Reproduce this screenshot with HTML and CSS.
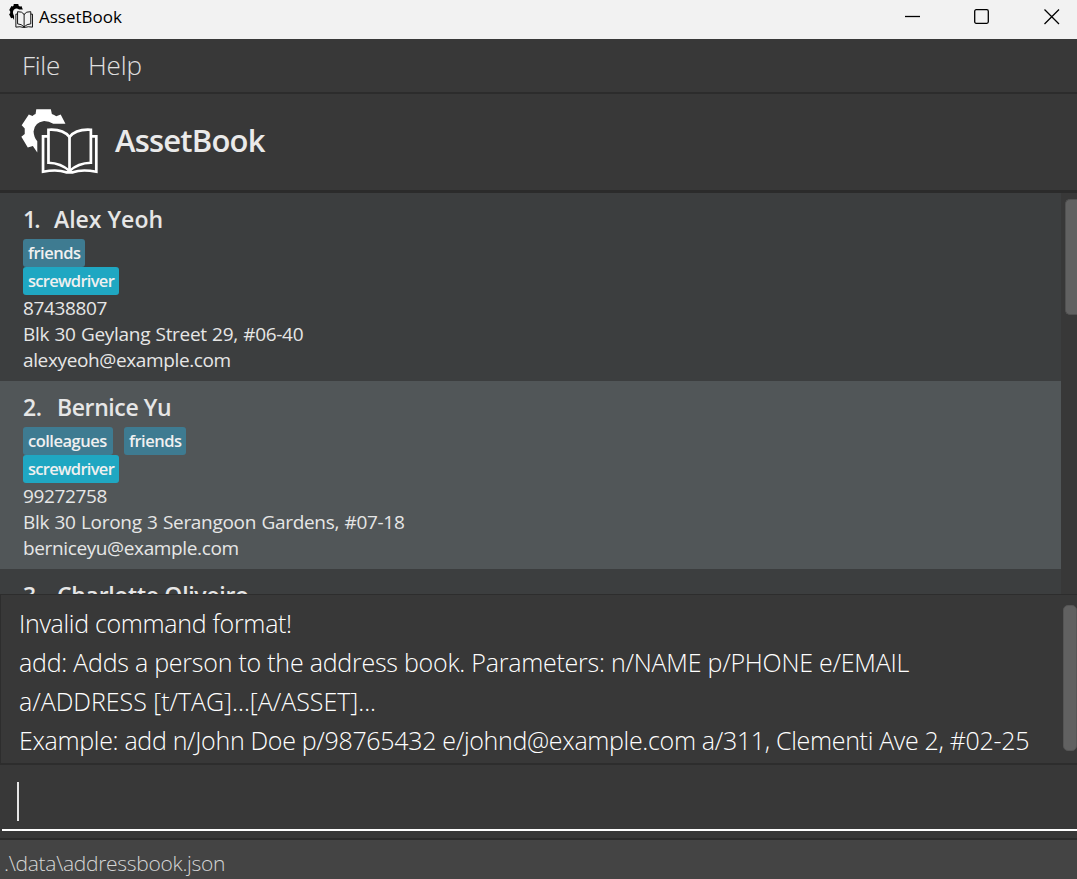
FILE: index.html
```html
<!DOCTYPE html>
<html lang="en">
<head>
<meta charset="utf-8">
<title>AssetBook</title>
<link rel="stylesheet" href="styles.css">
</head>
<body>
<svg class="defs" aria-hidden="true">
  <symbol id="logo" viewBox="20 26 227 197" preserveAspectRatio="none">
    <path fill="currentColor" d="M65 27H108L111 41Q118 43 124 48L137 43L151 71H115Q103 62 88 62Q59 66 57 94Q58 112 68 124V158L55 138L40 143L21 110L31 102V85L22 75L43 43L54 47Q58 43 63 41Z"/>
    <g fill="none" stroke="currentColor" stroke-width="8">
      <path d="M101 109H85V216Q128 208 153 218H173Q198 208 242 216V109H226"/>
      <path d="M101 89Q144 86 163 111Q182 86 226 89V189Q188 190 163 214Q138 190 101 189Z"/>
      <path d="M163 108V216"/>
    </g>
  </symbol>
</svg>
<div class="window">
  <header class="titlebar">
    <svg class="title-icon"><use href="#logo"/></svg>
    <span class="title-text">AssetBook</span>
    <div class="controls">
      <svg viewBox="0 0 16 16"><path d="M1 7.5H16"/></svg>
      <svg viewBox="0 0 16 16"><rect x=".7" y=".7" width="13.6" height="13.6" rx="1.5"/></svg>
      <svg viewBox="0 0 16 16"><path d="M.5 .5L15 15M15 .5L.5 15"/></svg>
    </div>
  </header>
  <nav class="menubar"><span class="file">File</span><span class="help">Help</span></nav>
  <div class="brand">
    <svg class="brand-icon"><use href="#logo"/></svg>
    <h1>AssetBook</h1>
  </div>
  <main class="list">
    <div class="cards">
      <article class="card">
        <h2><span class="num narrow">1.</span><span class="n1">Alex Yeoh</span></h2>
        <div class="tags"><span class="tag friends">friends</span></div>
        <div class="tags"><span class="tag asset">screwdriver</span></div>
        <p>87438807</p>
        <p class="address">Blk 30 Geylang Street 29, #06-40</p>
        <p>alexyeoh@example.com</p>
      </article>
      <article class="card alt">
        <h2><span class="num">2.</span><span class="n2">Bernice Yu</span></h2>
        <div class="tags"><span class="tag colleagues">colleagues</span><span class="tag friends">friends</span></div>
        <div class="tags"><span class="tag asset">screwdriver</span></div>
        <p>99272758</p>
        <p class="address">Blk 30 Lorong 3 Serangoon Gardens, #07-18</p>
        <p>berniceyu@example.com</p>
      </article>
      <article class="card">
        <h2><span class="num">3.</span><span class="n3">Charlotte Oliveiro</span></h2>
      </article>
    </div>
    <div class="scroll"><div class="thumb"></div></div>
  </main>
  <section class="result">
    <div class="message">
      <p class="r1">Invalid command format!</p>
      <p class="r2">add: Adds a person to the address book. Parameters: n/NAME p/PHONE e/EMAIL</p>
      <p class="r3">a/ADDRESS [t/TAG]...[A/ASSET]...</p>
      <p class="r4">Example: add n/John Doe p/98765432 e/johnd@example.com a/311, Clementi Ave 2, #02-25</p>
    </div>
    <div class="thumb"></div>
  </section>
  <section class="command"><div class="field"><span class="caret"></span></div></section>
  <footer class="status"><span>.\data\addressbook.json</span></footer>
</div>
</body>
</html>
```
FILE: styles.css
```css
* { box-sizing: border-box; margin: 0; padding: 0; }
body { width: 1077px; height: 879px; overflow: hidden; background: #383838; font-family: "Open Sans", "Noto Sans", sans-serif; }
.defs { display: none; }
.window { display: flex; flex-direction: column; height: 879px; white-space: nowrap; }
.titlebar { display: flex; align-items: center; height: 39px; flex: none; padding: 0 17px 6px 9px; background: #f2f2f2; color: #000; }
.title-icon { width: 24px; height: 24px; margin-top: -1px; }
.title-text { margin-left: 6px; font-size: 17px; line-height: 24px; letter-spacing: 0; }
.controls { display: flex; gap: 54px; margin-left: auto; }
.controls svg { width: 16px; height: 16px; fill: none; stroke: #000; stroke-width: 1.3; }
.menubar { display: flex; gap: 28px; height: 55px; flex: none; padding-left: 22px; border-bottom: 2px solid #2c2c2c; color: #e0e0e0; font-size: 26px; line-height: 52px; font-weight: 300; }
.file { width: 38px; letter-spacing: -0.3px; }
.help { letter-spacing: -0.1px; }
.brand { display: flex; height: 99px; flex: none; padding: 15px 0 0 21px; border-bottom: 3px solid #2b2b2b; color: #fff; }
.brand-icon { width: 77px; height: 65px; }
.brand h1 { margin-left: 17px; font-size: 31px; line-height: 32px; margin-top: 15px; font-weight: 600; letter-spacing: -0.8px; color: #eaeaea; }
.list { display: flex; height: 401px; flex: none; overflow: hidden; }
.cards { width: 1061px; flex: none; }
.card { height: 188px; padding: 10px 0 0 23px; background: #3c3e3f; color: #e6e6e6; }
.card.alt { background: #515658; }
.card h2 { display: flex; height: 36px; font-size: 23px; line-height: 32px; font-weight: 600; letter-spacing: -0.4px; }
.num { width: 34px; }
.num.narrow { width: 31px; letter-spacing: -2px; }
.n1 { letter-spacing: 0; }
.n3 { letter-spacing: -0.3px; }
.tags { display: flex; gap: 11px; height: 28px; }
.tag { height: 28px; padding-left: 5px; border-radius: 3px; background: #3e7b91; color: #f0f0f0; font-size: 16.5px; line-height: 28px; font-weight: 600; letter-spacing: -0.5px; }
.tag.friends { width: 62px; }
.tag.colleagues { width: 90px; }
.tag.asset { width: 96px; background: #1fa7c2; letter-spacing: -0.7px; }
.card p { height: 26px; font-size: 19px; line-height: 26px; letter-spacing: -0.37px; }
.card p.address { letter-spacing: -0.3px; word-spacing: 0.7px; }
.scroll { flex: 1; padding: 6px 0 0 4px; background: #383838; }
.scroll .thumb { width: 12px; height: 116px; border-radius: 5px 0 0 5px; background: #616161; border: 1px solid #515151; border-right: 0; }
.result { display: flex; justify-content: space-between; height: 171px; flex: none; padding: 10px 0 0 18px; border: 2px solid #2d2d2d; border-width: 1px 0 2px 1px; }
.message { margin-top: -1px; color: #fff; font-size: 25px; line-height: 39px; font-weight: 300; }
.r1 { letter-spacing: -0.32px; }
.r2 { letter-spacing: -0.24px; }
.r3 { letter-spacing: -0.03px; }
.r4 { letter-spacing: -0.32px; }
.result .thumb { width: 14px; height: 146px; border-radius: 5px; background: #616161; border: 1px solid #555; }
.command { height: 73px; flex: none; padding-left: 2px; }
.field { height: 66px; padding: 17px 0 0 15px; border-bottom: 2px solid #fff; }
.caret { display: block; width: 2px; height: 39px; background: #e5e5e5; }
.status { flex: 1; border-top: 2px solid #2c2c2c; background: #444; color: #d5d5d5; padding-left: 4px; font-size: 21px; line-height: 46px; font-weight: 300; letter-spacing: -0.3px; }
```
